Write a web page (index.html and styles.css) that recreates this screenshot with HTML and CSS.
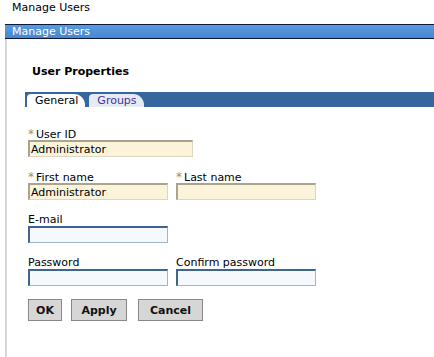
FILE: index.html
```html
<!DOCTYPE html>
<html lang="en">
<head>
    <meta charset="UTF-8">
    <title>Manage Users</title>
    <link rel="stylesheet" href="styles.css">
</head>
<body>
    <div class="page-title">Manage Users</div>

    <div class="portlet">
        <div class="portlet-bar">Manage Users</div>

        <div class="portlet-body">
            <h2 class="section-title">User Properties</h2>

            <!-- Pestañas -->
            <div class="tabs">
                <span class="tab tab-active">General</span>
                <span class="tab">Groups</span>
            </div>

            <form class="user-form">
                <div class="row">
                    <div class="field">
                        <label><span class="req">*</span>User ID</label>
                        <input type="text" class="input required wide" value="Administrator">
                    </div>
                </div>

                <div class="row">
                    <div class="field">
                        <label><span class="req">*</span>First name</label>
                        <input type="text" class="input required" value="Administrator">
                    </div>
                    <div class="field">
                        <label><span class="req">*</span>Last name</label>
                        <input type="text" class="input required">
                    </div>
                </div>

                <div class="row">
                    <div class="field">
                        <label>E-mail</label>
                        <input type="text" class="input">
                    </div>
                </div>

                <div class="row">
                    <div class="field">
                        <label>Password</label>
                        <input type="password" class="input">
                    </div>
                    <div class="field">
                        <label>Confirm password</label>
                        <input type="password" class="input">
                    </div>
                </div>

                <div class="buttons">
                    <button type="button" class="btn btn-ok">OK</button>
                    <button type="button" class="btn btn-apply">Apply</button>
                    <button type="button" class="btn btn-cancel">Cancel</button>
                </div>
            </form>
        </div>
    </div>
</body>
</html>
```

FILE: styles.css
```css
body {
    margin: 0;
    background-color: #FFFFFF;
    font-family: "DejaVu Sans", Verdana, sans-serif;
    font-size: 11px;
    color: #000;
}
.page-title {
    height: 24px;
    line-height: 16px;
    padding-left: 12px;
}
.portlet {
    margin-left: 5px;
}
.portlet-bar {
    height: 13px;
    line-height: 13px;
    padding-left: 7px;
    color: #fff;
    background: linear-gradient(#5a9ae0, #4787d0);
    border-top: 1px solid #0d1838;
    border-bottom: 1px solid #0d1838;
}
.portlet-body {
    border-left: 2px solid #d6d6d6;
    padding: 26px 0 40px 18px;
}
.section-title {
    margin: 0 0 0 7px;
    font-size: 11px;
    line-height: 13px;
}

/* Pestañas */
.tabs {
    margin-top: 14px;
    height: 13px;
    padding: 2px 0 0 2px;
    background-color: #35679e;
    display: flex;
    gap: 4px;
    align-items: flex-end;
}
.tab {
    height: 13px;
    line-height: 14px;
    padding: 0 7px 0 8px;
    border-radius: 4px 11px 0 0;
    background-color: #e6ebf3;
    color: #44339a;
}
.tab-active {
    background-color: #fff;
    color: #000;
}

/* Formulario */
.user-form {
    padding: 20px 0 0 3px;
}
.row {
    display: flex;
    gap: 8px;
    margin-bottom: 13px;
}
.field label {
    display: block;
    height: 13px;
    line-height: 14px;
}
.req {
    color: #8a9770;
    font-size: 12px;
    margin-right: 2px;
}
.input {
    box-sizing: border-box;
    width: 140px;
    height: 17px;
    margin: 0;
    padding: 0 0 0 1px;
    font-family: "DejaVu Sans", Verdana, sans-serif;
    font-size: 11px;
    background-color: #f5f9fd;
    border-top: 2px solid #3d6590;
    border-left: 2px solid #3d6590;
    border-right: 1px solid #9db5cd;
    border-bottom: 1px solid #9db5cd;
    outline: none;
}
.input.required {
    background-color: #fcf4da;
    border-top-color: #aaa48c;
    border-left-color: #aaa48c;
    border-right-color: #ddd6c0;
    border-bottom-color: #ddd6c0;
}
.input.wide {
    width: 165px;
}
.buttons {
    display: flex;
    gap: 9px;
}
.btn {
    height: 22px;
    padding: 0;
    background-color: #d6d6d6;
    border: 1px solid #888;
    font-family: "DejaVu Sans", Verdana, sans-serif;
    font-size: 11px;
    font-weight: bold;
    color: #111;
}
.btn-ok { width: 34px; }
.btn-apply { width: 56px; }
.btn-cancel { width: 65px; margin-left: 2px; }
```
